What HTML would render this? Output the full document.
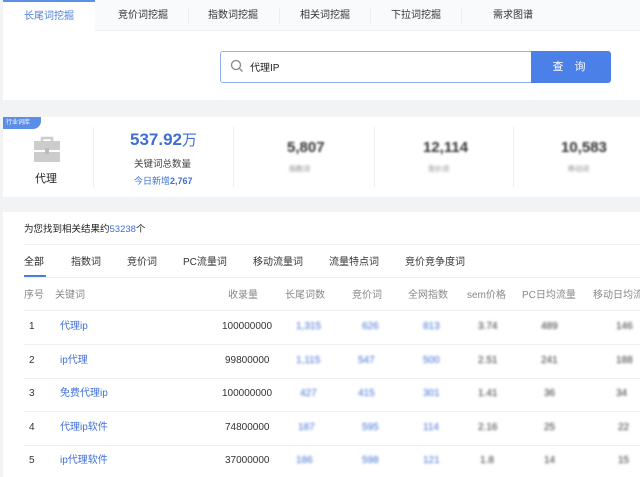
<!DOCTYPE html>
<html><head><meta charset="utf-8"><style>
*{margin:0;padding:0;box-sizing:border-box}
body{width:640px;height:477px;overflow:hidden;background:#f2f3f5;font-family:"Liberation Sans","Noto Sans CJK SC",sans-serif;font-size:10px;color:#333;position:relative}
.abs{position:absolute}
.card{position:absolute;background:#fff;left:3px;right:0}
.tab{position:absolute;top:0;height:31px;line-height:31px;font-size:10px;color:#333;text-align:center}
.sep{position:absolute;top:8px;width:1px;height:15px;background:#eee}
.vd{position:absolute;top:10px;width:1px;height:60px;background:#eee}
.num{font-weight:bold;font-size:15px;color:#333;filter:blur(1px)}
.row{position:absolute;left:21px;right:0;height:1px;background:#eef0f3}
.c{position:absolute;font-size:10px;white-space:nowrap;line-height:12px}
.b{color:#3f6fd6}
.bl{filter:blur(1.2px)}
</style></head><body>
<div class="card" style="top:0;height:100px;left:3px">
 <div class="abs" style="left:0;top:0;right:0;height:31px;background:#f9fafb;border-bottom:1px solid #f0f0f0"></div>
 <div class="tab" style="left:0;width:92px;background:#fff;border-top:2px solid #5b8ee6;color:#4a7fd8;line-height:29px">长尾词挖掘</div>
 <div class="tab" style="left:100px;width:80px">竞价词挖掘</div><div class="sep" style="left:185px"></div>
 <div class="tab" style="left:190px;width:80px">指数词挖掘</div><div class="sep" style="left:276px"></div>
 <div class="tab" style="left:282px;width:80px">相关词挖掘</div><div class="sep" style="left:367px"></div>
 <div class="tab" style="left:373px;width:80px">下拉词挖掘</div><div class="sep" style="left:458px"></div>
 <div class="tab" style="left:470px;width:80px">需求图谱</div>
 <div class="abs" style="left:217px;top:51px;width:312px;height:32px;border:1px solid #8fb0ee;border-radius:3px 0 0 3px;background:#fff"></div>
 <svg class="abs" style="left:227px;top:59px" width="14" height="14" viewBox="0 0 14 14"><circle cx="6" cy="6" r="4.5" fill="none" stroke="#888" stroke-width="1.3"/><path d="M9.3 9.3L12.5 12.5" stroke="#888" stroke-width="1.3"/></svg>
 <div class="abs" style="left:247px;top:59px;font-size:10px;color:#222">代理IP</div>
 <div class="abs" style="left:528px;top:51px;width:80px;height:32px;background:#4a80e8;border-radius:0 3px 3px 0;color:#fff;text-align:center;line-height:32px;font-size:11px;letter-spacing:4px">查 询</div>
</div>
<div class="card" style="top:117px;height:80px">
 <div class="abs" style="left:0;top:0;width:38px;height:12px;background:#5b8ee6;color:#fff;font-size:6px;line-height:12px;padding-left:3px;border-radius:0 0 8px 0">行业词库</div>
 <svg class="abs" style="left:28px;top:16px" width="32" height="32" viewBox="0 0 32 32"><path d="M11 8V5h10v3" fill="none" stroke="#ccc" stroke-width="2.5"/><rect x="3" y="8" width="26" height="9" fill="#ccc"/><rect x="3" y="19" width="26" height="10" fill="#ccc"/><rect x="14" y="15" width="4" height="6" fill="#bbb"/></svg>
 <div class="abs" style="left:32px;top:53px;font-size:11px;color:#222">代理</div>
 <div class="vd" style="left:90px"></div><div class="vd" style="left:230px"></div><div class="vd" style="left:371px"></div><div class="vd" style="left:510px"></div>
 <div class="abs" style="left:127px;top:12px;font-size:17px;font-weight:bold;color:#3f6fd6">537.92<span style="font-weight:normal;font-size:15px">万</span></div>
 <div class="abs" style="left:131px;top:39px;font-size:9.5px;color:#444">关键词总数量</div>
 <div class="abs" style="left:131px;top:57px;font-size:9px;color:#3f6fd6">今日新增<b>2,767</b></div>
 <div class="abs num" style="left:284px;top:22px">5,807</div><div class="abs bl" style="left:286px;top:47px;font-size:7px;color:#888">指数词</div>
 <div class="abs num" style="left:420px;top:22px">12,114</div><div class="abs bl" style="left:425px;top:47px;font-size:7px;color:#888">竞价词</div>
 <div class="abs num" style="left:558px;top:22px">10,583</div><div class="abs bl" style="left:565px;top:47px;font-size:7px;color:#888">移动词</div>
</div>
<div class="card" style="top:212px;height:265px">
 <div class="abs" style="left:21px;top:9px;font-size:9.5px;color:#222">为您找到相关结果约<span class="b">53238</span>个</div>
 <div class="row" style="top:32px"></div>
 <div class="c" style="left:21px;top:45px;color:#222">全部</div>
 <div class="abs" style="left:21px;top:63px;width:22px;height:2px;background:#4a7fd8"></div>
 <div class="c" style="left:68px;top:45px">指数词</div>
 <div class="c" style="left:124px;top:45px">竞价词</div>
 <div class="c" style="left:180px;top:45px">PC流量词</div>
 <div class="c" style="left:250px;top:45px">移动流量词</div>
 <div class="c" style="left:326px;top:45px">流量特点词</div>
 <div class="c" style="left:402px;top:45px">竞价竞争度词</div>
 <div class="row" style="top:65px"></div>
 <div class="c" style="left:21px;top:78px;color:#888">序号</div>
 <div class="c" style="left:52px;top:78px;color:#888">关键词</div>
 <div class="c" style="left:225px;top:78px;color:#888">收录量</div>
 <div class="c" style="left:282px;top:78px;color:#888">长尾词数</div>
 <div class="c" style="left:349px;top:78px;color:#888">竞价词</div>
 <div class="c" style="left:405px;top:78px;color:#888">全网指数</div>
 <div class="c" style="left:464px;top:78px;color:#888">sem价格</div>
 <div class="c" style="left:519px;top:78px;color:#888">PC日均流量</div>
 <div class="c" style="left:590px;top:78px;color:#888">移动日均流</div>
 <div class="row" style="top:98px"></div>
 <div class="row" style="top:132px"></div>
 <div class="row" style="top:166px"></div>
 <div class="row" style="top:199px"></div>
 <div class="row" style="top:233px"></div>
</div>
<div style="position:absolute;left:0;top:0">
 <div class="c" style="left:29px;top:321px">1</div><div class="c b" style="left:60px;top:321px">代理ip</div><div class="c" style="left:222px;top:321px">100000000</div><div class="c b bl" style="left:296px;top:321px">1,315</div><div class="c b bl" style="left:362px;top:321px">626</div><div class="c b bl" style="left:423px;top:321px">813</div><div class="c bl" style="left:478px;top:321px">3.74</div><div class="c bl" style="left:541px;top:321px">489</div><div class="c bl" style="left:616px;top:321px">146</div>
 <div class="c" style="left:29px;top:355px">2</div><div class="c b" style="left:60px;top:355px">ip代理</div><div class="c" style="left:225px;top:355px">99800000</div><div class="c b bl" style="left:296px;top:355px">1,115</div><div class="c b bl" style="left:358px;top:355px">547</div><div class="c b bl" style="left:423px;top:355px">500</div><div class="c bl" style="left:478px;top:355px">2.51</div><div class="c bl" style="left:541px;top:355px">241</div><div class="c bl" style="left:616px;top:355px">188</div>
 <div class="c" style="left:29px;top:388px">3</div><div class="c b" style="left:60px;top:388px">免费代理ip</div><div class="c" style="left:222px;top:388px">100000000</div><div class="c b bl" style="left:300px;top:388px">427</div><div class="c b bl" style="left:358px;top:388px">415</div><div class="c b bl" style="left:423px;top:388px">301</div><div class="c bl" style="left:478px;top:388px">1.41</div><div class="c bl" style="left:544px;top:388px">36</div><div class="c bl" style="left:616px;top:388px">34</div>
 <div class="c" style="left:29px;top:422px">4</div><div class="c b" style="left:60px;top:422px">代理ip软件</div><div class="c" style="left:225px;top:422px">74800000</div><div class="c b bl" style="left:298px;top:422px">187</div><div class="c b bl" style="left:362px;top:422px">595</div><div class="c b bl" style="left:423px;top:422px">114</div><div class="c bl" style="left:478px;top:422px">2.16</div><div class="c bl" style="left:544px;top:422px">25</div><div class="c bl" style="left:618px;top:422px">22</div>
 <div class="c" style="left:29px;top:455px">5</div><div class="c b" style="left:60px;top:455px">ip代理软件</div><div class="c" style="left:225px;top:455px">37000000</div><div class="c b bl" style="left:296px;top:455px">186</div><div class="c b bl" style="left:362px;top:455px">598</div><div class="c b bl" style="left:423px;top:455px">121</div><div class="c bl" style="left:480px;top:455px">1.8</div><div class="c bl" style="left:544px;top:455px">14</div><div class="c bl" style="left:618px;top:455px">15</div>
</div>
</body></html>
